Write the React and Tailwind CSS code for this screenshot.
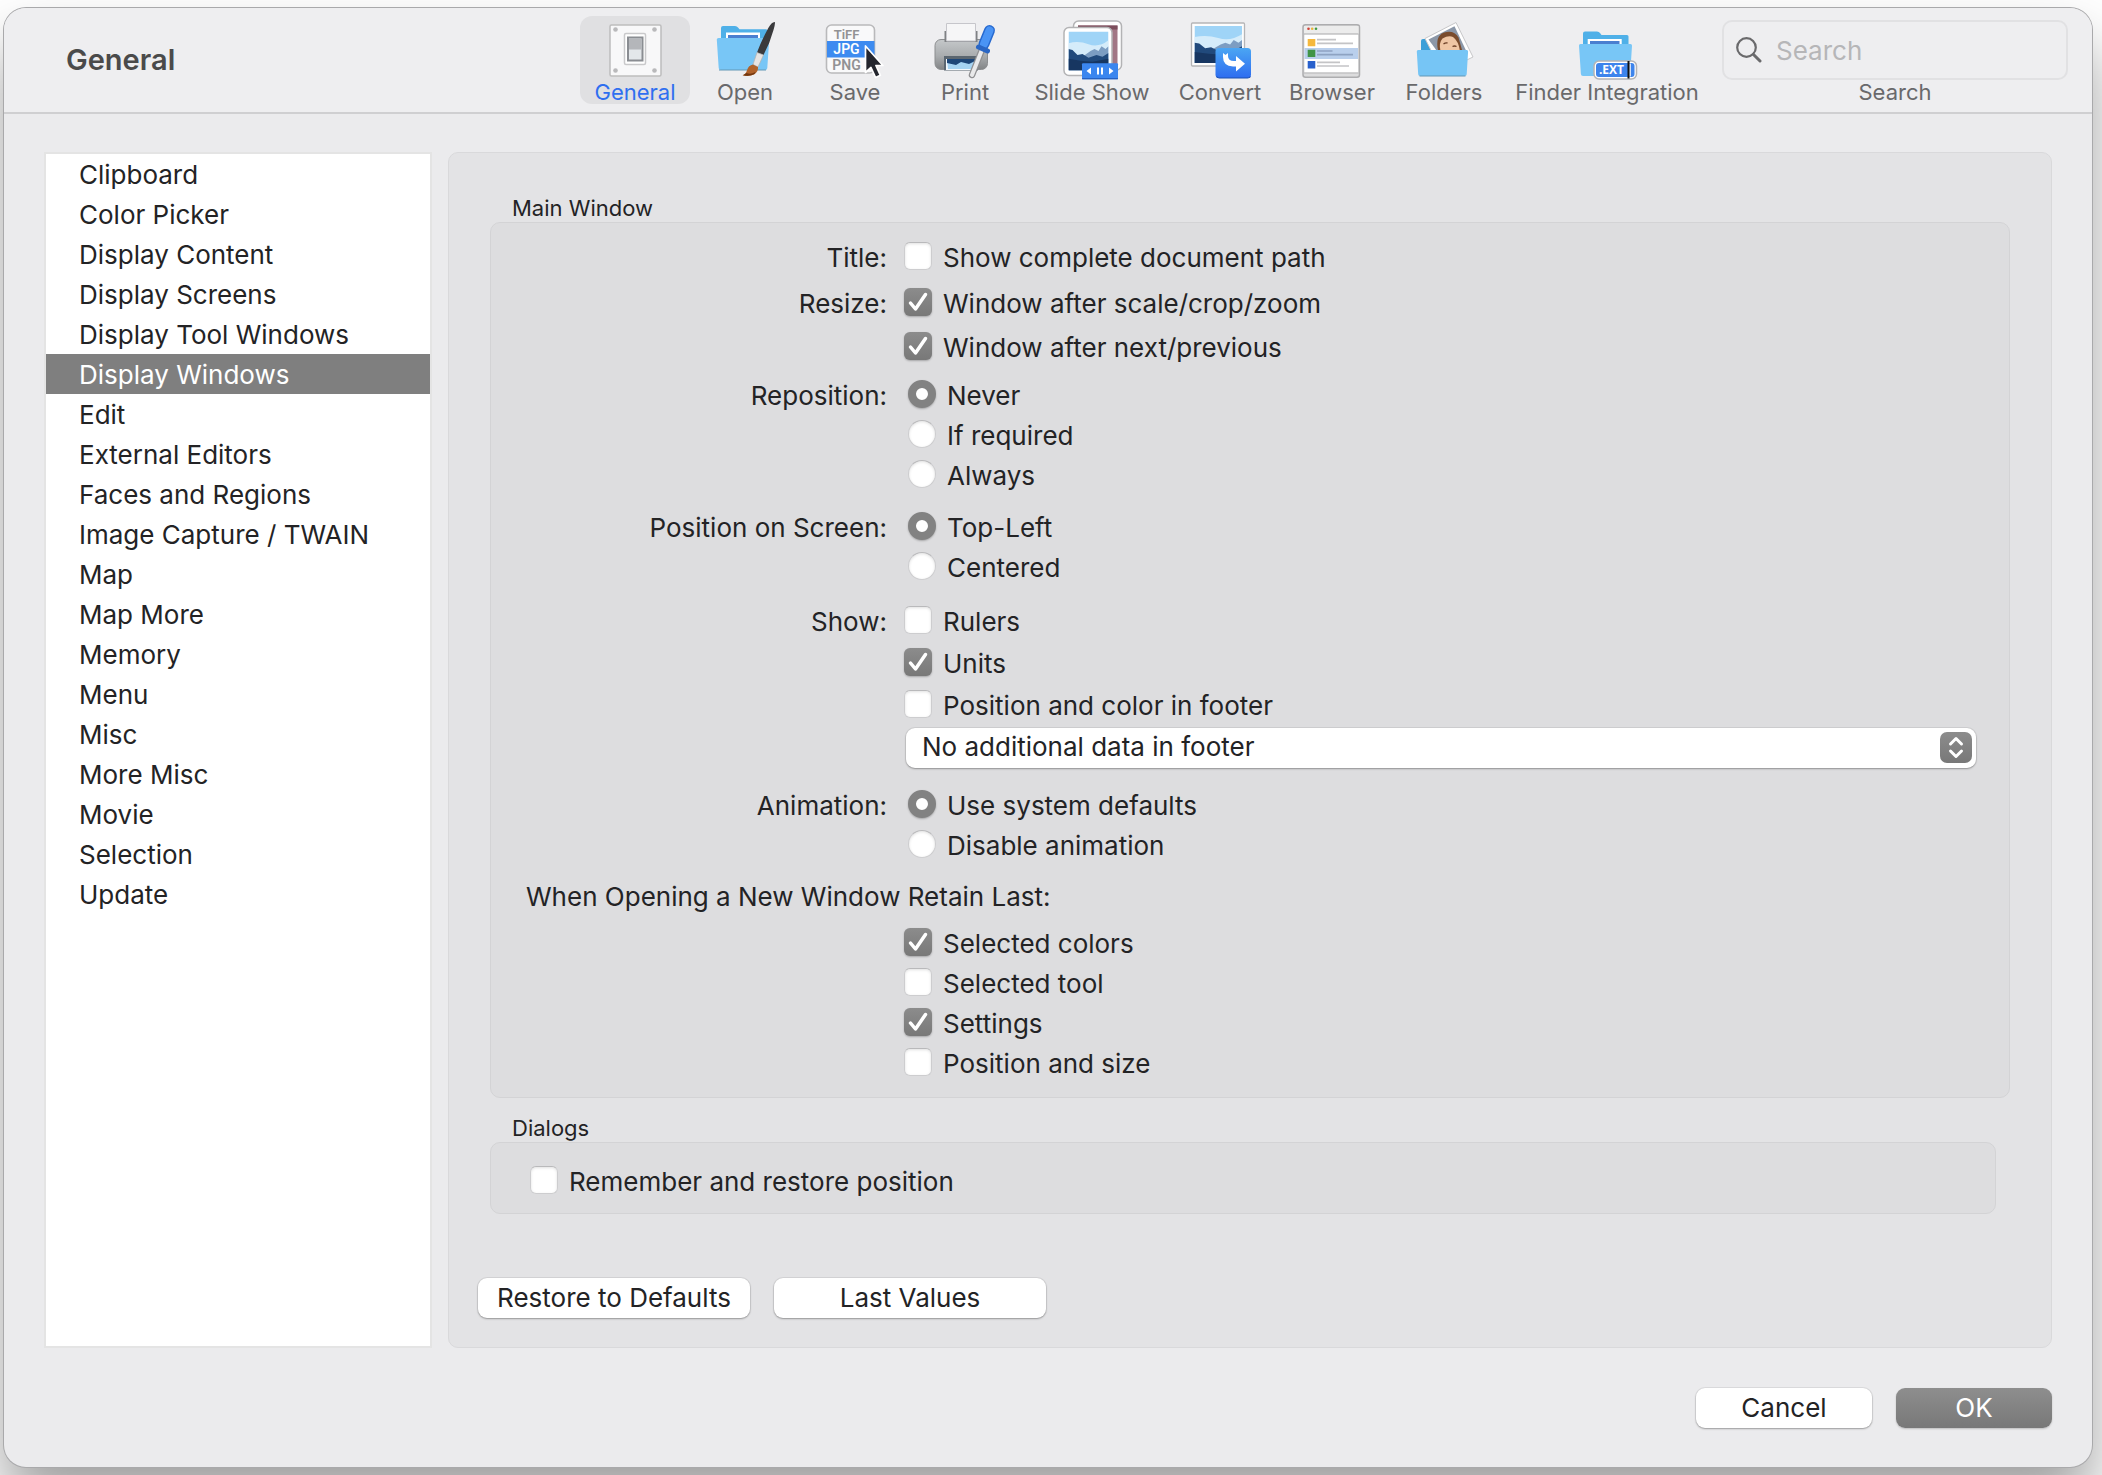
import { useState } from 'react'

const categories = [
  'Clipboard', 'Color Picker', 'Display Content', 'Display Screens', 'Display Tool Windows',
  'Display Windows', 'Edit', 'External Editors', 'Faces and Regions', 'Image Capture / TWAIN',
  'Map', 'Map More', 'Memory', 'Menu', 'Misc', 'More Misc', 'Movie', 'Selection', 'Update',
]

function GeneralIcon() {
  return (
    <svg viewBox="0 0 64 64" className="w-16 h-16" aria-hidden="true">
      <rect x="7" y="9" width="51" height="51" rx="1.5" fill="#f8f8f9" stroke="#bdbdbd" strokeWidth="1.5" />
      <g fill="#b9b9bb">
        <circle cx="12.5" cy="13.5" r="2.3" /><circle cx="51.5" cy="13.5" r="2.3" />
        <circle cx="12.5" cy="54.5" r="2.3" /><circle cx="51.5" cy="54.5" r="2.3" />
      </g>
      <rect x="21.5" y="17.5" width="21" height="31" rx="1.5" fill="#fff" stroke="#c9c9cb" strokeWidth="1.5" />
      <rect x="25" y="21.500" width="14.500" height="23" fill="#e3e7ea" stroke="#8a8d92" strokeWidth="2" />
      <rect x="26" y="22.500" width="12.500" height="11" fill="#b4b6ba" />
    </svg>
  )
}

function OpenIcon() {
  return (
    <svg viewBox="0 0 64 64" className="w-16 h-16" aria-hidden="true">
      <path d="M8 24V12q0-2 2-2h12q2 0 3 1.500l1.500 1.800H53q1.800 0 1.800 1.800V30H8z" fill="#4fb0e8" />
      <path d="M13 16.500h34V30H13z" fill="#fff" />
      <path d="M15 19h30v8H15z" fill="#4a7fd0" />
      <path d="M5.500 22h49q1.800 0 1.700 1.800l-1.900 28.200q-.1 2-2.100 2H7.800q-2 0-2.100-2L3.800 23.800Q3.700 22 5.500 22z" fill="#78c6f6" />
      <path d="M6 54h47" stroke="#6397b5" strokeWidth="1.200" />
      <path d="M61.800 6q-3-.3-6.500 6-7 13-11.300 24.500l6.500 2.500Q57 27 60.500 14q2-6.500 1.300-8z" fill="#3a3a3c" />
      <path d="M44 36.500l6.500 2.500-5.500 12-5-2.500z" fill="#e6e4e2" stroke="#b5b0ac" strokeWidth=".7" />
      <path d="M40 48.500l5 2.500q.5 5-4 7.500-5 2.500-11.500.8 3.500-1 4.500-5 1.500-5 6-5.800z" fill="#b0622a" />
      <path d="M30 59.300q7 1.500 11.500-1.300l1-2q-5 3-9 1z" fill="#73380f" />
    </svg>
  )
}

function SaveIcon() {
  return (
    <svg viewBox="0 0 64 64" className="w-16 h-16 overflow-visible" aria-hidden="true">
      <rect x="3.500" y="9" width="48" height="48" rx="5" fill="#f9f9fa" stroke="#b9b9bb" strokeWidth="1.600" />
      <rect x="4" y="25" width="47.500" height="16.500" fill="#3d8bf0" />
      <g fontFamily="Roboto, sans-serif" fontWeight="600" fontSize="14" textAnchor="middle">
        <text x="23.500" y="22.500" fontSize="13" fill="#929294">TiFF</text>
        <text x="23.500" y="38" fill="#fff">JPG</text>
        <text x="23.500" y="53.500" fill="#929294">PNG</text>
      </g>
      <path d="M42.500 30v26.500l5.500-5 4.600 10 4.800-2.200-4.500-9.800h7z" fill="#24262e" stroke="#fff" strokeWidth="1.700" strokeLinejoin="round" />
    </svg>
  )
}

function PrintIcon() {
  return (
    <svg viewBox="0 0 64 64" className="w-16 h-16" aria-hidden="true">
      <defs>
        <linearGradient id="printerBody" x1="0" y1="0" x2="0" y2="1">
          <stop offset="0" stopColor="#c5c8ca" />
          <stop offset=".55" stopColor="#a9acae" />
          <stop offset="1" stopColor="#828486" />
        </linearGradient>
      </defs>
      <rect x="2" y="23.500" width="52.500" height="30" rx="6" fill="url(#printerBody)" stroke="#8c8e90" />
      <path d="M11.500 15h33v11h-33z" fill="#7f8184" />
      <path d="M13.500 7.500h29V25h-29z" fill="#f6f6f7" stroke="#c6c6cb" />
      <path d="M11 40h34v14.500H11z" fill="#5b6670" />
      <path d="M13 43h30v11H13z" fill="#f2f7fb" />
      <path d="M14 43h28l-1 10H15z" fill="#a5d3f2" />
      <path d="M14 43h28v2l-6 3-8-2-5 3-9-2z" fill="#1d4678" />
      <path d="M48.500 35l-9.500 24" stroke="#8f8f91" strokeWidth="6.500" strokeLinecap="round" />
      <path d="M48.500 35l-9.500 24" stroke="#e9e9ea" strokeWidth="4" strokeLinecap="round" />
      <path d="M56.500 14.500L51 28" stroke="#2769cf" strokeWidth="11" strokeLinecap="round" />
      <path d="M56.500 14.500L51 28" stroke="#4a94f5" strokeWidth="8" strokeLinecap="round" />
      <path d="M45.500 31l9 4" stroke="#2a66c4" strokeWidth="5" strokeLinecap="round" />
    </svg>
  )
}

function Mountains({ x, y, w, h }) {
  return (
    <svg x={x} y={y} width={w} height={h} viewBox="0 0 40 40" preserveAspectRatio="none">
      <path d="M0 0h40v40H0z" fill="#9fd4f7" />
      <path d="M0 12q10-3 20 1t20-4v20H0z" fill="#d5ecfa" />
      <path d="M14 26l8-6 4-2 4 2 3-5 4 3 3-3v18H14z" fill="#7c9dc2" />
      <path d="M0 18l4 1 5 5 5-1 6 4 8-3 6 2 6-4v18H0z" fill="#214a7c" />
      <path d="M0 28l12 2 12 1 16-3v12H0z" fill="#173661" />
    </svg>
  )
}

function SlideShowIcon() {
  return (
    <svg viewBox="0 0 64 64" className="w-16 h-16" aria-hidden="true">
      <rect x="13.500" y="5" width="48" height="49" rx="5" fill="#fff" stroke="#b3b3b5" strokeWidth="1.500" />
      <path d="M18 9.500h39.500V49H18z" fill="#a27785" />
      <path d="M18 9.500h39.500v4H18z" fill="#7c4e5c" />
      <rect x="4" y="11.500" width="48" height="48" rx="5" fill="#fff" stroke="#b3b3b5" strokeWidth="1.500" />
      <Mountains x="8.500" y="15.500" w="40" h="39" />
      <rect x="22" y="47.300" width="36" height="16" rx="1" fill="#3b86ef" />
      <path d="M22 62.300h36v1H22z" fill="#1f55b5" />
      <path d="M31 51.500v7l-4.500-3.500zM49 51.500v7l4.500-3.500zM37 51.500h2v7h-2zM41 51.500h2v7h-2z" fill="#fff" />
    </svg>
  )
}

function ConvertIcon() {
  return (
    <svg viewBox="0 0 64 64" className="w-16 h-16" aria-hidden="true">
      <defs>
        <linearGradient id="convertBadge" x1="0" y1="0" x2="0" y2="1">
          <stop offset="0" stopColor="#4ba6f3" />
          <stop offset="1" stopColor="#2e6df0" />
        </linearGradient>
      </defs>
      <rect x="3.500" y="7" width="53" height="43" rx="1" fill="#fdfdfd" stroke="#b5b5b7" strokeWidth="1.300" />
      <Mountains x="6.500" y="10" w="47.500" h="37" />
      <rect x="27.500" y="32" width="35.500" height="30" rx="3.500" fill="url(#convertBadge)" />
      <path d="M28.500 60.500q1 1.500 3 1.500h28q2 0 3-1.500" fill="none" stroke="#1d50b0" strokeWidth="1.200" />
      <path d="M35 37l2.500 2 2.500-2v3q0 5 6 5h2v-5l9 7.800-9 7.700v-5h-3Q35 50 35 41z" fill="#fff" />
    </svg>
  )
}

function BrowserIcon() {
  return (
    <svg viewBox="0 0 64 64" className="w-16 h-16" aria-hidden="true">
      <rect x="3" y="8.700" width="56.500" height="52.500" rx="2.500" fill="#dcdcdd" stroke="#adadaf" strokeWidth="1.500" />
      <path d="M4 10h54.500v8H4z" fill="#ececec" />
      <path d="M4 18h54.500" stroke="#a9a9ab" />
      <path d="M4.500 18.700h53.500V56.500H4.500z" fill="#fff" />
      <path d="M4.500 32h53.500v11H4.500z" fill="#b9cfec" />
      <path d="M4 57h54.500" stroke="#b5b5b7" />
      <circle cx="8.500" cy="12.800" r="1.300" fill="#cf4035" />
      <circle cx="12.200" cy="12.800" r="1.300" fill="#eab53b" />
      <circle cx="16" cy="12.800" r="1.300" fill="#3f9a45" />
      <path d="M7.700 23h7.600v7.300H7.700z" fill="#f5b83d" />
      <path d="M7.700 33.700h7.600V41H7.700z" fill="#3f9447" />
      <path d="M7.700 45h7.600v7.500H7.700z" fill="#2961cd" />
      <path d="M17 23.700h19M17 27.300h36M17 46.300h23M17 50h32" stroke="#c4c4c6" strokeWidth="1.700" />
      <path d="M17 35h15.500M17 38.700h36" stroke="#8ea3c2" strokeWidth="1.700" />
    </svg>
  )
}

function FoldersIcon() {
  return (
    <svg viewBox="-3 0 64 64" className="w-16 h-16" aria-hidden="true">
      <path d="M6 36V25q0-2 2-2h5l6 13z" fill="#3c9fd8" />
      <path d="M10 22.500L41 6.500l17 34.500-31 15z" fill="#fff" stroke="#c7c7c9" />
      <path d="M13.500 23.500l26-13.300 12 25.300L30 46z" fill="#8b97a8" />
      <path d="M23 34q-3-14 6-17.500 10-3 14.500 5l3.500 12.500z" fill="#7a4c2d" />
      <path d="M25.500 35q-2-8 2-12.500 6-3.500 10.500-1.500 5.500 4 7 14z" fill="#efc6a4" />
      <path d="M28.500 28q2-1.500 4-1M37.500 30.500q2-1 4 0" stroke="#6b3f26" strokeWidth="1.300" fill="none" />
      <path d="M3.200 34h48.500q1.500 0 1.400 1.500l-1.400 22.800q-.1 1.700-1.800 1.700H5q-1.700 0-1.800-1.700L1.800 35.500Q1.700 34 3.200 34z" fill="#76c5f5" />
      <path d="M4.500 60h46" stroke="#6397b5" strokeWidth="1.200" />
    </svg>
  )
}

function FinderIcon() {
  return (
    <svg viewBox="0 0 64 64" className="w-16 h-16" aria-hidden="true">
      <path d="M8 30V17.500q0-2 2-2h12q2 0 3 1.500l1.500 2H52q1.500 0 1.500 1.500V34H8z" fill="#4fb0e8" />
      <path d="M12.700 23h34v10h-34z" fill="#fff" />
      <path d="M15 25h29.500v5H15z" fill="#4a7fd0" />
      <path d="M5.500 28h50q1.600 0 1.500 1.700L55.200 58q-.1 2-2.100 2H8q-2 0-2.100-2L4 29.700Q3.900 28 5.500 28z" fill="#78c6f6" />
      <rect x="19" y="45" width="42.500" height="18" rx="5" fill="#fff" stroke="#b3b3b5" strokeWidth="1.500" />
      <rect x="21" y="47" width="38.500" height="14" rx="3" fill="#3d84ec" />
      <path d="M54 47.500h2v13h-2z" fill="#cfdff7" />
      <path d="M53.500 45v17.500" stroke="#111" strokeWidth="2" />
      <text x="36.500" y="58.300" textAnchor="middle" fontFamily="'Open Sans', sans-serif" fontWeight="700" fontSize="12" fill="#fff">.EXT</text>
    </svg>
  )
}

const tools = [
  { name: 'General', Icon: GeneralIcon, width: 'w-[110px]' },
  { name: 'Open', Icon: OpenIcon, width: 'w-[110px]' },
  { name: 'Save', Icon: SaveIcon, width: 'w-[110px]' },
  { name: 'Print', Icon: PrintIcon, width: 'w-[110px]' },
  { name: 'Slide Show', Icon: SlideShowIcon, width: 'w-36' },
  { name: 'Convert', Icon: ConvertIcon, width: 'w-28' },
  { name: 'Browser', Icon: BrowserIcon, width: 'w-28' },
  { name: 'Folders', Icon: FoldersIcon, width: 'w-28' },
  { name: 'Finder Integration', Icon: FinderIcon, width: 'w-[214px]' },
]

function Toolbar() {
  const [active, setActive] = useState('General')

  return (
    <header className="flex items-start py-2 pl-[62px] pr-6 bg-[#eeeef0] border-b-2 border-[#cfcfd1]">
      <h1 className="flex-1 mt-6 text-[29px] leading-10 font-semibold text-[#4a4a4a]">{active}</h1>
      <nav className="flex shrink-0">
        {tools.map(({ name, Icon, width }) => (
          <button
            key={name}
            type="button"
            onClick={() => setActive(name)}
            className={`${width} flex flex-col items-center rounded-xl text-[22px] leading-6 whitespace-nowrap ${name === active ? 'bg-[#e0e0e2] text-[#2f6ff0]' : 'text-[#69696b]'}`}
          >
            <Icon />
            {name}
          </button>
        ))}
      </nav>
      <div className="flex flex-col items-center ml-2 pt-1 w-[346px]">
        <div className="flex items-center gap-[14px] w-full h-[60px] pl-3 rounded-[10px] border-2 border-[#e1e1e3]">
          <svg viewBox="0 0 26 26" className="w-[26px] h-[26px] shrink-0" fill="none" stroke="#6a6a6c" aria-hidden="true">
            <circle cx="10.500" cy="10.500" r="9.300" strokeWidth="2.200" />
            <path d="M17.500 17.500l6.500 6.500" strokeWidth="3" strokeLinecap="round" />
          </svg>
          <input
            id="search"
            type="search"
            placeholder="Search"
            className="w-full pt-px bg-transparent leading-8 placeholder:text-[#b6b6b8] focus:outline-none"
          />
        </div>
        <label htmlFor="search" className="text-[22px] leading-6 text-[#69696b]">Search</label>
      </div>
    </header>
  )
}

function Checkbox({ label, checked = false }) {
  return (
    <label className="flex items-start gap-[11px] w-fit leading-8">
      <span className="grid w-7 h-7">
        <input
          type="checkbox"
          defaultChecked={checked}
          className="peer [grid-area:1/1] appearance-none w-7 h-7 rounded-md bg-white border border-[#cdcdcf] border-t-[#b9b9bb] shadow-[inset_0_1px_3px_rgba(0,0,0,0.12)] checked:border-0 checked:bg-linear-to-b checked:from-[#8c8c8c] checked:to-[#787878] checked:shadow-[0_1px_2px_rgba(0,0,0,0.25)]"
        />
        <svg viewBox="0 0 28 28" className="[grid-area:1/1] w-7 h-7 pointer-events-none invisible peer-checked:visible" fill="none" aria-hidden="true">
          <path d="M6.500 15l5 6L21.500 6.500" stroke="#fff" strokeWidth="3.500" strokeLinecap="round" strokeLinejoin="round" />
        </svg>
      </span>
      {label}
    </label>
  )
}

function Radio({ name, label, checked = false }) {
  return (
    <label className="flex items-start gap-[11px] w-fit ml-1 leading-8">
      <input
        type="radio"
        name={name}
        defaultChecked={checked}
        className="appearance-none w-7 h-7 rounded-full bg-white border border-[#cdcdcf] border-t-[#b9b9bb] shadow-[inset_0_1px_3px_rgba(0,0,0,0.12)] checked:border-8 checked:border-[#828282] checked:shadow-[0_1px_2px_rgba(0,0,0,0.25)]"
      />
      {label}
    </label>
  )
}

function Row({ label, gap, children }) {
  return (
    <div role="group" aria-label={label} className="flex gap-[17px]">
      <span className="w-[396px] shrink-0 text-right leading-8">{label}</span>
      <div className={`flex-1 flex flex-col ${gap}`}>{children}</div>
    </div>
  )
}

function FooterSelect() {
  return (
    <div className="relative ml-[2px] -mt-1">
      <select
        aria-label="Additional data in footer"
        className="block appearance-none w-full h-10 pl-4 pb-0.5 rounded-[9px] bg-white shadow-[0_0_0_1px_rgba(0,0,0,0.06),0_1px_2px_rgba(0,0,0,0.3)]"
      >
        <option>No additional data in footer</option>
      </select>
      <svg viewBox="0 0 32 32" className="absolute right-1 top-1 w-8 h-8 pointer-events-none" fill="none" aria-hidden="true">
        <defs>
          <linearGradient id="stepper" x1="0" y1="0" x2="0" y2="1">
            <stop offset="0" stopColor="#8c8c8c" />
            <stop offset="1" stopColor="#787878" />
          </linearGradient>
        </defs>
        <rect width="32" height="31" rx="7" fill="url(#stepper)" />
        <path d="M10.500 12l5.500-5.500 5.500 5.500M10.500 19l5.500 5.500 5.500-5.500" stroke="#fff" strokeWidth="3" strokeLinecap="round" strokeLinejoin="round" />
      </svg>
    </div>
  )
}

function Sidebar() {
  const [selected, setSelected] = useState('Display Windows')

  return (
    <aside className="w-[388px] shrink-0 bg-white border-2 border-[#e4e4e4]">
      {categories.map((category) => (
        <button
          key={category}
          type="button"
          onClick={() => setSelected(category)}
          className={`block w-full h-10 pl-[33px] pt-0.5 text-left ${category === selected ? 'bg-[#7f7f7f] text-white' : ''}`}
        >
          {category}
        </button>
      ))}
    </aside>
  )
}

const whiteButton = 'h-10 rounded-[9px] bg-white shadow-[0_0_0_1px_rgba(0,0,0,0.06),0_1px_2px_rgba(0,0,0,0.3)]'

function App() {
  return (
    <div className="flex min-h-screen pt-2 pb-2 pl-1 pr-[10px] overflow-hidden bg-white font-['Inter',sans-serif] text-[26px] leading-9 text-[#232325]">
      <div className="flex-1 flex flex-col overflow-hidden rounded-[22px] bg-[#ebebed] shadow-[0_0_0_1px_#a9a9ab,0_36px_60px_rgba(0,0,0,0.38)]">
        <Toolbar />

        <main className="flex gap-4 px-10 pt-[38px]">
          <Sidebar />

          <div className="flex-1 px-[41px] pt-[41px] pb-[29px] rounded-[10px] bg-[#e3e3e5] border border-[#d9d9db]">
            <section>
              <h2 className="pl-[22px] text-[22px] leading-7">Main Window</h2>
              <div className="pt-[19px] pb-[17px] pr-[33px] rounded-[10px] bg-[#dddddf] border border-[#d3d3d5]">
                <div className="flex flex-col gap-[14px]">
                  <Row label="Title:" gap="gap-2">
                    <Checkbox label="Show complete document path" />
                  </Row>
                  <Row label="Resize:" gap="gap-3">
                    <Checkbox label="Window after scale/crop/zoom" checked />
                    <Checkbox label="Window after next/previous" checked />
                  </Row>
                </div>
                <div className="flex flex-col gap-5 pt-4">
                  <Row label="Reposition:" gap="gap-2">
                    <Radio name="reposition" label="Never" checked />
                    <Radio name="reposition" label="If required" />
                    <Radio name="reposition" label="Always" />
                  </Row>
                  <Row label="Position on Screen:" gap="gap-2">
                    <Radio name="position" label="Top-Left" checked />
                    <Radio name="position" label="Centered" />
                  </Row>
                </div>
                <div className="flex flex-col gap-[22px] pt-[22px]">
                  <Row label="Show:" gap="gap-[10px]">
                    <Checkbox label="Rulers" />
                    <Checkbox label="Units" checked />
                    <Checkbox label="Position and color in footer" />
                    <FooterSelect />
                  </Row>
                  <Row label="Animation:" gap="gap-2">
                    <Radio name="animation" label="Use system defaults" checked />
                    <Radio name="animation" label="Disable animation" />
                  </Row>
                </div>
                <h3 className="pt-[19px] pb-[15px] pl-[35px] leading-8">When Opening a New Window Retain Last:</h3>
                <Row gap="gap-2">
                  <Checkbox label="Selected colors" checked />
                  <Checkbox label="Selected tool" />
                  <Checkbox label="Settings" checked />
                  <Checkbox label="Position and size" />
                </Row>
              </div>
            </section>

            <section className="mt-4 mr-[14px]">
              <h2 className="pl-[22px] text-[22px] leading-7">Dialogs</h2>
              <div className="pt-[23px] pb-[15px] pl-[39px] rounded-[10px] bg-[#dddddf] border border-[#d3d3d5]">
                <Checkbox label="Remember and restore position" />
              </div>
            </section>

            <div className="flex gap-6 mt-16 -ml-3">
              <button type="button" className={`${whiteButton} w-[272px]`}>Restore to Defaults</button>
              <button type="button" className={`${whiteButton} w-[272px]`}>Last Values</button>
            </div>
          </div>
        </main>

        <footer className="flex justify-end gap-6 px-10 pt-10 pb-[39px]">
          <button type="button" className={`${whiteButton} w-44`}>Cancel</button>
          <button type="button" className="w-[156px] h-10 rounded-[9px] bg-linear-to-b from-[#8e8e8e] to-[#787878] text-white shadow-[0_1px_2px_rgba(0,0,0,0.2)]">OK</button>
        </footer>
      </div>
    </div>
  )
}

export default App
